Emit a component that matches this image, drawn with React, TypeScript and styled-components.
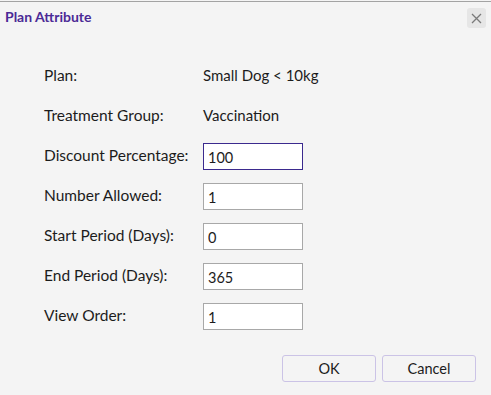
import React from "react";
import styled, { createGlobalStyle } from "styled-components";

const GlobalStyle = createGlobalStyle`
  html, body {
    margin: 0;
    padding: 0;
    background: #f4f4f4;
  }
  * {
    box-sizing: border-box;
  }
`;

const Dialog = styled.div`
  width: 491px;
  height: 395px;
  background: #f4f4f4;
  border-top: 1px solid #a3a3a3;
  margin-top: 1px;
  font-family: Lato, "Liberation Sans", sans-serif;
  color: #1c1c1c;
  display: flex;
  flex-direction: column;
`;

const TitleBar = styled.div`
  height: 30px;
  display: flex;
  align-items: center;
  justify-content: space-between;
  padding: 0 5px 0 5px;
`;

const Title = styled.div`
  font-size: 14px;
  font-weight: 700;
  color: #4b2a96;
  margin-top: -1px;
`;

const CloseButton = styled.button`
  width: 19px;
  height: 20px;
  border: none;
  border-radius: 3px;
  background: #e6e6e6;
  padding: 0;
  display: flex;
  align-items: center;
  justify-content: center;
  margin-top: 2px;
`;

const Form = styled.div`
  display: grid;
  grid-template-columns: 159px 100px;
  grid-auto-rows: 40px;
  align-items: center;
  padding: 24px 0 0 44px;
`;

const Label = styled.div`
  font-size: 15.5px;
  margin-top: -2px;
  white-space: nowrap;
`;

const Value = styled.div`
  font-size: 15px;
  margin-top: -2px;
  white-space: nowrap;
`;

const Input = styled.input<{ $focused?: boolean }>`
  width: 100px;
  height: 27px;
  border: 1px solid ${(p) => (p.$focused ? "#3b2a8e" : "#a8a8a8")};
  background: #fff;
  font-family: Lato, "Liberation Sans", sans-serif;
  font-size: 14.5px;
  color: #1c1c1c;
  padding: 2px 0 0 4px;
  outline: none;
`;

const Footer = styled.div`
  display: flex;
  justify-content: flex-end;
  gap: 6px;
  padding: 19px 15px 0 0;
`;

const Button = styled.button`
  width: 94px;
  height: 27px;
  border: 1px solid #cbc3e6;
  border-radius: 3px;
  background: #f4f4f4;
  font-family: Lato, "Liberation Sans", sans-serif;
  font-size: 14.5px;
  color: #1c1c1c;
`;

const fields = [
  { label: "Discount Percentage:", value: "100", focused: true },
  { label: "Number Allowed:", value: "1" },
  { label: "Start Period (Days):", value: "0" },
  { label: "End Period (Days):", value: "365" },
  { label: "View Order:", value: "1" },
];

const App = () => {
  return (
    <Dialog>
      <GlobalStyle />
      <TitleBar>
        <Title>Plan Attribute</Title>
        <CloseButton>
          <svg width="11" height="11" viewBox="0 0 11 11">
            <path d="M1 1 L10 10 M10 1 L1 10" stroke="#7a7a7a" strokeWidth="1.3" />
          </svg>
        </CloseButton>
      </TitleBar>
      <Form>
        <Label>Plan:</Label>
        <Value>Small Dog &lt; 10kg</Value>
        <Label>Treatment Group:</Label>
        <Value>Vaccination</Value>
        {fields.map((f) => (
          <React.Fragment key={f.label}>
            <Label>{f.label}</Label>
            <Input defaultValue={f.value} $focused={f.focused} />
          </React.Fragment>
        ))}
      </Form>
      <Footer>
        <Button>OK</Button>
        <Button>Cancel</Button>
      </Footer>
    </Dialog>
  );
};

export default App;
